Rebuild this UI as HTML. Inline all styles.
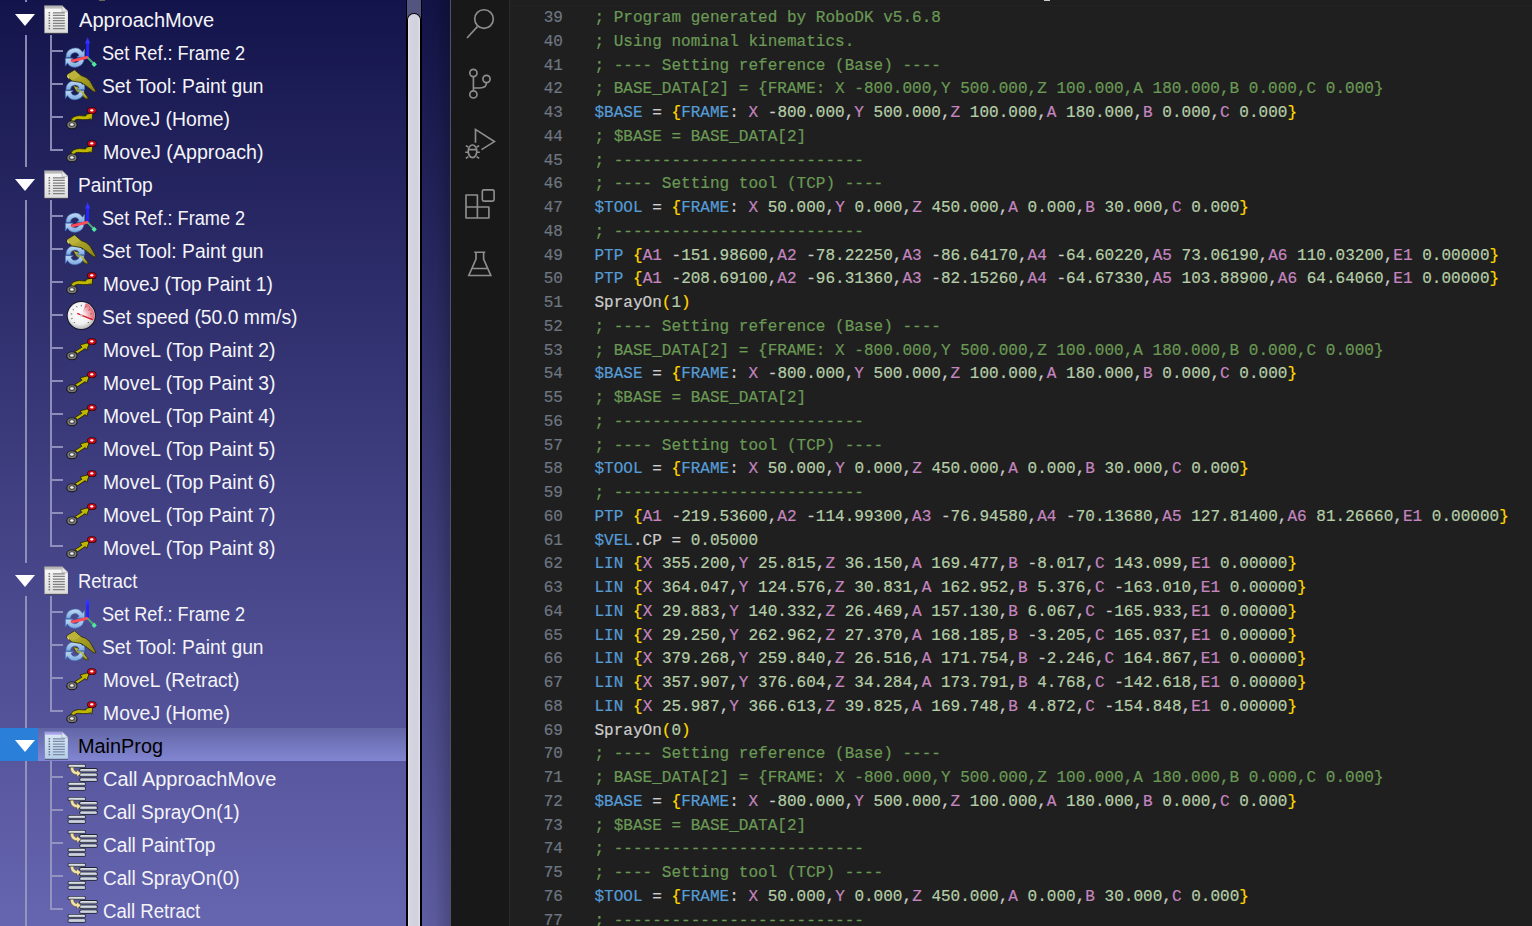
<!DOCTYPE html>
<html><head><meta charset="utf-8">
<style>
html,body{margin:0;padding:0;}
body{width:1532px;height:926px;overflow:hidden;position:relative;background:#1f1f1f;font-family:"Liberation Sans",sans-serif;}
#left{position:absolute;left:0;top:0;width:450px;height:926px;overflow:hidden;
 background:linear-gradient(180deg,#14144c 0%,#6665b0 100%);}
#lshade{position:absolute;left:422px;top:0;width:28px;height:926px;background:linear-gradient(90deg,rgba(0,0,0,0.07) 0%,rgba(0,0,0,0.12) 50%,rgba(0,0,0,0.27) 100%);}
#lsep{position:absolute;left:450px;top:0;width:1px;height:926px;background:#50506a;}
#sb{position:absolute;left:406px;top:0;width:16px;height:926px;background:#000;}
#sbtrack{position:absolute;left:1px;top:0;width:14px;height:20px;background:#545480;}
#sbthumb{position:absolute;left:2px;top:14px;width:12px;height:920px;background:linear-gradient(90deg,#e4e4f0,#d4d4e0 18%,#d2d2de 80%,#e2e2ee);border-radius:6px 6px 0 0;box-shadow:0 0 0 1px #000;}
.vl1{position:absolute;left:25px;width:2px;background:#9c9cc4;opacity:.85}
.vl2{position:absolute;left:50px;width:2px;background:#9c9cc4;opacity:.85}
.hl{position:absolute;left:52px;width:11px;height:2px;background:#9c9cc4;opacity:.85}
.tri{position:absolute;left:15px;width:21px;height:13px;}
.tri:before{content:"";position:absolute;left:0;top:0;border-left:10.3px solid transparent;border-right:10.3px solid transparent;border-top:12.3px solid #fff;}
.sel{position:absolute;left:0;width:406px;height:33px;background:linear-gradient(180deg,#6266a6,#8286d2);}
.selb{position:absolute;left:0;width:38px;height:33px;background:#2a80d8;}
.doc{position:absolute;left:42px;}
.ic{position:absolute;left:64px;}
.t1,.t2{position:absolute;height:33px;line-height:33px;font-size:20px;color:#f4f4f8;white-space:nowrap;transform-origin:0 0;}
.t1{left:78px;}
.t2{left:103px;}
.blk{color:#000;}
#act{position:absolute;left:451px;top:0;width:58px;height:926px;background:#181818;}
#actb{position:absolute;left:509px;top:0;width:1px;height:926px;background:#2b2b2b;}
#act svg{position:absolute;left:0;top:0;}
#ed{position:absolute;left:510px;top:0;width:1022px;height:926px;background:#1f1f1f;overflow:hidden;}
#edshadow{position:absolute;left:0;top:5px;width:1022px;height:1px;background:#222326;}
#bcmark{position:absolute;left:534px;top:0;width:6px;height:1px;background:#c8c8c8;}
pre{margin:0;font-family:"Liberation Mono",monospace;font-size:16px;letter-spacing:0.021px;-webkit-text-stroke:0.2px currentColor;line-height:23.75px;position:absolute;white-space:pre;}
#nums{left:0;width:53px;text-align:right;color:#6e7681;top:7px;}
#code{left:84.5px;top:7px;color:#cccccc;}
i{font-style:normal;}
.c{color:#6a9955}.k{color:#569cd6}.p{color:#c586c0}.n{color:#b5cea8}.b{color:#ffd700}
</style></head><body>
<svg width="0" height="0" style="position:absolute">
<defs>
 <linearGradient id="gpage" x1="0" y1="0" x2="0" y2="1"><stop offset="0" stop-color="#fafafa"/><stop offset="1" stop-color="#dcdcdc"/></linearGradient>
 <linearGradient id="gtop" x1="0" y1="0" x2="0" y2="1"><stop offset="0" stop-color="#9a9a9a"/><stop offset="1" stop-color="#e0e0e0"/></linearGradient>
 <linearGradient id="gpagesel" x1="0" y1="0" x2="0" y2="1"><stop offset="0" stop-color="#dde8f6"/><stop offset="1" stop-color="#b8cfe8"/></linearGradient>
 <linearGradient id="gtopsel" x1="0" y1="0" x2="0" y2="1"><stop offset="0" stop-color="#8a7ae8"/><stop offset="1" stop-color="#c8c8f0"/></linearGradient>
 <radialGradient id="ggauge" cx=".45" cy=".4" r=".6"><stop offset="0" stop-color="#ffffff"/><stop offset=".7" stop-color="#f0f0f0"/><stop offset="1" stop-color="#b8b8b8"/></radialGradient>
 <g id="idoc">
  <path d="M2.5 2 H20 L26.3 8 V29 H2.5 Z" fill="#222" transform="translate(0.6,0.8)" opacity=".7"/>
  <path d="M2.5 1.7 H20 L26.3 7.7 V29 H2.5 Z" fill="url(#gpage)" stroke="#8a8a8a" stroke-width=".6"/>
  <path d="M3 2.2 H20 L23 5 H3 Z" fill="url(#gtop)"/>
  <path d="M20 1.7 L20 7.7 L26.3 7.7 Z" fill="#e8e8e8" stroke="#9a9a9a" stroke-width=".5"/>
  <g stroke="#808080" stroke-width="1.3">
   <path d="M10.9 8.8H22.8M10.9 11.4H22.8M10.9 14.1H22.8M10.9 16.6H22.8M10.9 19.3H22.8M10.9 21.9H22.8M10.9 24.6H22.8"/>
  </g>
  <g fill="#6a6a6a"><rect x="6.6" y="8.1" width="1.5" height="1.4"/><rect x="6.6" y="10.7" width="1.5" height="1.4"/><rect x="6.6" y="13.4" width="1.5" height="1.4"/><rect x="6.6" y="15.9" width="1.5" height="1.4"/><rect x="6.6" y="18.6" width="1.5" height="1.4"/><rect x="6.6" y="21.2" width="1.5" height="1.4"/><rect x="6.6" y="23.9" width="1.5" height="1.4"/></g>
 </g>
 <g id="idocsel">
  <path d="M2.5 2 H20 L26.3 8 V29 H2.5 Z" fill="#223" transform="translate(0.6,0.8)" opacity=".7"/>
  <path d="M2.5 1.7 H20 L26.3 7.7 V29 H2.5 Z" fill="url(#gpagesel)" stroke="#6a7a9a" stroke-width=".6"/>
  <path d="M3 2.2 H20 L23 5 H3 Z" fill="url(#gtopsel)"/>
  <path d="M20 1.7 L20 7.7 L26.3 7.7 Z" fill="#dde6f2" stroke="#8a9aba" stroke-width=".5"/>
  <g stroke="#7a8ca8" stroke-width="1.3">
   <path d="M10.9 8.8H22.8M10.9 11.4H22.8M10.9 14.1H22.8M10.9 16.6H22.8M10.9 19.3H22.8M10.9 21.9H22.8M10.9 24.6H22.8"/>
  </g>
  <g fill="#5a6a88"><rect x="6.6" y="8.1" width="1.5" height="1.4"/><rect x="6.6" y="10.7" width="1.5" height="1.4"/><rect x="6.6" y="13.4" width="1.5" height="1.4"/><rect x="6.6" y="15.9" width="1.5" height="1.4"/><rect x="6.6" y="18.6" width="1.5" height="1.4"/><rect x="6.6" y="21.2" width="1.5" height="1.4"/><rect x="6.6" y="23.9" width="1.5" height="1.4"/></g>
 </g>
 <linearGradient id="garr" x1="0" y1="0" x2="0" y2="1"><stop offset="0" stop-color="#c4dcf4"/><stop offset="1" stop-color="#7aa8e0"/></linearGradient>
 <g id="arrows">
  <path d="M2 21.5 A9 9 0 0 1 18.6 16.3 L20.6 13.3 L20.6 21.2 L12.8 21.2 L15.1 19.3 A4.5 4.5 0 0 0 6.5 21.2 Z" fill="url(#garr)" stroke="#3f70b8" stroke-width=".6"/>
  <path d="M20 22 A9 9 0 0 1 3.4 27 L1.4 30 L1.4 22.2 L9.2 22.2 L6.9 24.1 A4.5 4.5 0 0 0 15.5 22.2 Z" fill="url(#garr)" stroke="#3f70b8" stroke-width=".6"/>
 </g>
 <g id="iref">
  <use href="#arrows"/>
  <path d="M23.6 21.5 V6" stroke="#2424ff" stroke-width="2.8"/>
  <path d="M21 7.5 L23.6 1.3 L26.2 7.5 Z" fill="#3434ff"/>
  <path d="M8.2 24.8 L23 21.3" stroke="#ff4a58" stroke-width="2.8" stroke-linecap="round"/>
  <path d="M23.6 21.5 L30 28" stroke="#50a878" stroke-width="1.8"/>
  <path d="M30.2 25.6 L32.8 28.6 L30.2 31 L27.6 28.4 Z" fill="#50e8a0"/>
 </g>
 <g id="itool">
  <linearGradient id="ggun" x1="0" y1="0" x2="1" y2="1"><stop offset="0" stop-color="#c8c048"/><stop offset=".5" stop-color="#a49c22"/><stop offset="1" stop-color="#8a8418"/></linearGradient>
  <path d="M9 16.5 L14 18 L19 22 L24.5 29.5 L22 30 L12 22 Z" fill="url(#ggun)" stroke="#2a2a08" stroke-width=".7"/>
  <use href="#arrows" transform="translate(0,-0.5)"/>
  <path d="M3 5.5 L10.5 1 L17 6.5 L22 8.5 L26 12 L32 22.5 L30 23 L21 16 L17 13.5 L8 12 L3 8 Z" fill="url(#ggun)" stroke="#2a2a08" stroke-width=".8"/>
  <path d="M3.3 6 L10.5 1.6 L16.5 6.8 L9 10.5 Z" fill="#bcb43a"/>
  <path d="M3.3 6 L5 8.5 L5 10 L3.3 8 Z" fill="#f0eca0"/>
  <path d="M14.5 20.5 L19 23 L23.5 29 L20.5 27 Z" fill="#b8b030"/>
 </g>
 <g id="disc">
  <ellipse cx="7.9" cy="22.9" rx="5.6" ry="4.4" fill="#141414"/>
  <ellipse cx="7.9" cy="22.7" rx="4.6" ry="3.5" fill="#7c7c7c"/>
  <ellipse cx="7.9" cy="22.6" rx="3.1" ry="2.3" fill="#4c4c4c"/>
  <ellipse cx="7.9" cy="22.5" rx="1.8" ry="1.3" fill="#f2f2ee"/>
  <ellipse cx="27.8" cy="8.7" rx="4.7" ry="3.4" fill="#2a0000"/>
  <ellipse cx="27.8" cy="8.6" rx="4.1" ry="2.8" fill="#c80a18"/>
  <ellipse cx="27.8" cy="8.4" rx="1.7" ry="1.1" fill="#fff"/>
 </g>
 <g id="imovej">
  <path d="M6.6 18.6 C8 15.2 11 13.8 15.5 13.6 C18 13.6 19.5 14.2 21.8 13.9 L22 12.4 L28.8 10.8 L27.9 18.2 L26.4 16.9 C23 17.9 19 17.9 15.5 17.4 C12.5 17.1 10.8 18 9.8 19.8 Z" fill="#c0b800" stroke="#1a1a08" stroke-width=".8"/>
  <use href="#disc"/>
 </g>
 <g id="imovel">
  <path d="M10.8 18.6 L17.8 14.3 L16.2 11.8 L25.8 9.3 L22.6 17.3 L21.2 15.6 L13.6 20.6 Z" fill="#c0b800" stroke="#1a1a08" stroke-width=".8"/>
  <use href="#disc"/>
 </g>
 <radialGradient id="gsect" cx="17.3" cy="15.5" r="13.5" gradientUnits="userSpaceOnUse"><stop offset="0" stop-color="#ffffff" stop-opacity="0"/><stop offset=".45" stop-color="#f4c0c8"/><stop offset="1" stop-color="#e86070"/></radialGradient>
 <g id="ispeed">
  <circle cx="17.3" cy="15.5" r="14.6" fill="#161628"/>
  <circle cx="17.3" cy="15.5" r="13.6" fill="url(#ggauge)"/>
  <path d="M17.3 15.5 L21.7 3.2 A13 13 0 0 1 29.4 20 Z" fill="url(#gsect)"/>
  <g stroke="#505050" stroke-width=".9">
   <path d="M10.8 22.0 L9.8 23.0 M8.6 18.3 L7.2 18.8 M8.2 14.1 L6.8 13.8 M9.9 10.1 L8.7 9.3 M13.1 7.3 L12.5 6.1 M17.3 6.3 L17.3 4.9 M21.5 7.3 L22.1 6.1 M24.7 10.1 L25.9 9.3 M26.4 14.1 L27.8 13.8 M26.0 18.3 L27.4 18.8 M23.8 22.0 L24.8 23.0"/>
  </g>
  <path d="M13.2 13.4 L28.8 19.8" stroke="#e01828" stroke-width="1.3"/>
  <circle cx="17.3" cy="15.4" r="1.3" fill="#c8c8c8"/>
 </g>
 <g id="bar"><rect x="-.7" y="-2.1" width="18.4" height="4.2" rx="1.8" fill="#23232e"/><rect x="0" y="-1.3" width="17" height="2.6" rx="1.2" fill="#bcc4d0"/><rect x="1" y="-1.1" width="15" height=".9" fill="#dfe5ee"/></g>
 <g id="icall">
  <use href="#bar" transform="translate(4.3,4)"/>
  <use href="#bar" transform="translate(16,8.2)"/>
  <use href="#bar" transform="translate(16,12.9)"/>
  <use href="#bar" transform="translate(16,17.7)"/>
  <use href="#bar" transform="translate(4.3,22)"/>
  <use href="#bar" transform="translate(4.3,26.6)"/>
  <path d="M6.3 5.2 L9.6 5.2 C9.6 7.8 10.6 9.3 12.8 9.6 L12.6 7.4 L17 11.3 L13 15.2 L13 12.8 C8.8 12.5 6.3 9.8 6.3 5.2 Z" fill="#f2e2a4" stroke="#4a4420" stroke-width=".5"/>
 </g>
</defs>
</svg>

<div id="left">
<div class="vl1" style="top:-40px;height:42px"></div>
<div class="vl1" style="top:35px;height:132px"></div>
<div class="vl1" style="top:200px;height:363px"></div>
<div class="vl1" style="top:596px;height:132px"></div>
<div class="vl1" style="top:761px;height:165px"></div>
<div class="hl" style="top:50px"></div>
<div class="vl2" style="top:35px;height:33px"></div>
<div class="hl" style="top:83px"></div>
<div class="vl2" style="top:68px;height:33px"></div>
<div class="hl" style="top:116px"></div>
<div class="vl2" style="top:101px;height:33px"></div>
<div class="hl" style="top:149px"></div>
<div class="vl2" style="top:134px;height:17px"></div>
<div class="hl" style="top:215px"></div>
<div class="vl2" style="top:200px;height:33px"></div>
<div class="hl" style="top:248px"></div>
<div class="vl2" style="top:233px;height:33px"></div>
<div class="hl" style="top:281px"></div>
<div class="vl2" style="top:266px;height:33px"></div>
<div class="hl" style="top:314px"></div>
<div class="vl2" style="top:299px;height:33px"></div>
<div class="hl" style="top:347px"></div>
<div class="vl2" style="top:332px;height:33px"></div>
<div class="hl" style="top:380px"></div>
<div class="vl2" style="top:365px;height:33px"></div>
<div class="hl" style="top:413px"></div>
<div class="vl2" style="top:398px;height:33px"></div>
<div class="hl" style="top:446px"></div>
<div class="vl2" style="top:431px;height:33px"></div>
<div class="hl" style="top:479px"></div>
<div class="vl2" style="top:464px;height:33px"></div>
<div class="hl" style="top:512px"></div>
<div class="vl2" style="top:497px;height:33px"></div>
<div class="hl" style="top:545px"></div>
<div class="vl2" style="top:530px;height:17px"></div>
<div class="hl" style="top:611px"></div>
<div class="vl2" style="top:596px;height:33px"></div>
<div class="hl" style="top:644px"></div>
<div class="vl2" style="top:629px;height:33px"></div>
<div class="hl" style="top:677px"></div>
<div class="vl2" style="top:662px;height:33px"></div>
<div class="hl" style="top:710px"></div>
<div class="vl2" style="top:695px;height:17px"></div>
<div class="hl" style="top:776px"></div>
<div class="vl2" style="top:761px;height:33px"></div>
<div class="hl" style="top:809px"></div>
<div class="vl2" style="top:794px;height:33px"></div>
<div class="hl" style="top:842px"></div>
<div class="vl2" style="top:827px;height:33px"></div>
<div class="hl" style="top:875px"></div>
<div class="vl2" style="top:860px;height:33px"></div>
<div class="hl" style="top:908px"></div>
<div class="vl2" style="top:893px;height:17px"></div>
<div class="tri" style="top:14px"></div>
<svg class="doc" style="top:4px" width="26" height="31"><use href="#idoc"/></svg>
<div class="t1" style="top:4px;left:78.70px;transform:scaleX(1.0052)">ApproachMove</div>
<svg class="ic" style="top:36px" width="34" height="32"><use href="#iref"/></svg>
<div class="t2" style="top:37px;left:102.49px;transform:scaleX(0.9071)">Set Ref.: Frame 2</div>
<svg class="ic" style="top:69px" width="34" height="32"><use href="#itool"/></svg>
<div class="t2" style="top:70px;left:102.44px;transform:scaleX(0.9645)">Set Tool: Paint gun</div>
<svg class="ic" style="top:102px" width="34" height="32"><use href="#imovej"/></svg>
<div class="t2" style="top:103px;left:103.43px;transform:scaleX(0.9690)">MoveJ (Home)</div>
<svg class="ic" style="top:135px" width="34" height="32"><use href="#imovej"/></svg>
<div class="t2" style="top:136px;left:103.42px;transform:scaleX(0.9826)">MoveJ (Approach)</div>
<div class="tri" style="top:179px"></div>
<svg class="doc" style="top:169px" width="26" height="31"><use href="#idoc"/></svg>
<div class="t1" style="top:169px;left:78.44px;transform:scaleX(0.9605)">PaintTop</div>
<svg class="ic" style="top:201px" width="34" height="32"><use href="#iref"/></svg>
<div class="t2" style="top:202px;left:102.49px;transform:scaleX(0.9071)">Set Ref.: Frame 2</div>
<svg class="ic" style="top:234px" width="34" height="32"><use href="#itool"/></svg>
<div class="t2" style="top:235px;left:102.44px;transform:scaleX(0.9645)">Set Tool: Paint gun</div>
<svg class="ic" style="top:267px" width="34" height="32"><use href="#imovej"/></svg>
<div class="t2" style="top:268px;left:103.45px;transform:scaleX(0.9545)">MoveJ (Top Paint 1)</div>
<svg class="ic" style="top:300px" width="34" height="32"><use href="#ispeed"/></svg>
<div class="t2" style="top:301px;left:102.43px;transform:scaleX(0.9665)">Set speed (50.0 mm/s)</div>
<svg class="ic" style="top:333px" width="34" height="32"><use href="#imovel"/></svg>
<div class="t2" style="top:334px;left:103.43px;transform:scaleX(0.9670)">MoveL (Top Paint 2)</div>
<svg class="ic" style="top:366px" width="34" height="32"><use href="#imovel"/></svg>
<div class="t2" style="top:367px;left:103.43px;transform:scaleX(0.9670)">MoveL (Top Paint 3)</div>
<svg class="ic" style="top:399px" width="34" height="32"><use href="#imovel"/></svg>
<div class="t2" style="top:400px;left:103.43px;transform:scaleX(0.9670)">MoveL (Top Paint 4)</div>
<svg class="ic" style="top:432px" width="34" height="32"><use href="#imovel"/></svg>
<div class="t2" style="top:433px;left:103.43px;transform:scaleX(0.9670)">MoveL (Top Paint 5)</div>
<svg class="ic" style="top:465px" width="34" height="32"><use href="#imovel"/></svg>
<div class="t2" style="top:466px;left:103.43px;transform:scaleX(0.9670)">MoveL (Top Paint 6)</div>
<svg class="ic" style="top:498px" width="34" height="32"><use href="#imovel"/></svg>
<div class="t2" style="top:499px;left:103.43px;transform:scaleX(0.9670)">MoveL (Top Paint 7)</div>
<svg class="ic" style="top:531px" width="34" height="32"><use href="#imovel"/></svg>
<div class="t2" style="top:532px;left:103.43px;transform:scaleX(0.9670)">MoveL (Top Paint 8)</div>
<div class="tri" style="top:575px"></div>
<svg class="doc" style="top:565px" width="26" height="31"><use href="#idoc"/></svg>
<div class="t1" style="top:565px;left:78.48px;transform:scaleX(0.9203)">Retract</div>
<svg class="ic" style="top:597px" width="34" height="32"><use href="#iref"/></svg>
<div class="t2" style="top:598px;left:102.49px;transform:scaleX(0.9071)">Set Ref.: Frame 2</div>
<svg class="ic" style="top:630px" width="34" height="32"><use href="#itool"/></svg>
<div class="t2" style="top:631px;left:102.44px;transform:scaleX(0.9645)">Set Tool: Paint gun</div>
<svg class="ic" style="top:663px" width="34" height="32"><use href="#imovel"/></svg>
<div class="t2" style="top:664px;left:103.44px;transform:scaleX(0.9553)">MoveL (Retract)</div>
<svg class="ic" style="top:696px" width="34" height="32"><use href="#imovej"/></svg>
<div class="t2" style="top:697px;left:103.43px;transform:scaleX(0.9690)">MoveJ (Home)</div>
<div class="sel" style="top:728px"></div><div class="selb" style="top:728px"></div>
<div class="tri" style="top:740px"></div>
<svg class="doc" style="top:730px" width="26" height="31"><use href="#idocsel"/></svg>
<div class="t1 blk" style="top:730px;left:78.41px;transform:scaleX(0.9929)">MainProg</div>
<svg class="ic" style="top:762px" width="34" height="32"><use href="#icall"/></svg>
<div class="t2" style="top:763px;left:102.60px;transform:scaleX(0.9994)">Call ApproachMove</div>
<svg class="ic" style="top:795px" width="34" height="32"><use href="#icall"/></svg>
<div class="t2" style="top:796px;left:102.65px;transform:scaleX(0.9525)">Call SprayOn(1)</div>
<svg class="ic" style="top:828px" width="34" height="32"><use href="#icall"/></svg>
<div class="t2" style="top:829px;left:102.65px;transform:scaleX(0.9534)">Call PaintTop</div>
<svg class="ic" style="top:861px" width="34" height="32"><use href="#icall"/></svg>
<div class="t2" style="top:862px;left:102.65px;transform:scaleX(0.9525)">Call SprayOn(0)</div>
<svg class="ic" style="top:894px" width="34" height="32"><use href="#icall"/></svg>
<div class="t2" style="top:895px;left:102.67px;transform:scaleX(0.9308)">Call Retract</div>
<div id="lshade"></div>
<div style="position:absolute;left:99px;top:0;width:6px;height:1px;background:#6a6850"></div>
<div id="sb"><div id="sbtrack"></div><div id="sbthumb"></div></div>
</div>
<div id="lsep"></div>

<div id="act">
<svg width="58" height="926" fill="none" stroke="#8e8e8e" stroke-width="1.65">
 <circle cx="33" cy="19" r="9.3"/>
 <path d="M26.4 26.6 L16 38"/>
 <circle cx="22.4" cy="73" r="3.6"/>
 <circle cx="35.5" cy="79" r="3.6"/>
 <circle cx="22.4" cy="94.4" r="3.6"/>
 <path d="M22.4 76.6 V90.8 M35.5 82.6 C35.5 86 33 88 29 88 H22.4"/>
 <path d="M24.5 142.8 V129.4 L43.4 141.6 L30.5 149.6"/>
 <ellipse cx="21.5" cy="151.3" rx="4.3" ry="6.3"/>
 <path d="M17.2 149.6 H25.8 M17.3 147 L14.8 145.6 M17 152.2 H14.2 M17.4 156.6 L14.8 158.4 M25.7 147 L28.2 145.6 M26 152.2 H28.8 M25.6 156.6 L28.2 158.4"/>
 <path d="M15 195 H26.4 V207 H37.9 V218 H15 Z M15 207 H26.4 V218" stroke-linejoin="round"/>
 <rect x="31.3" y="189.9" width="11.8" height="11.2" rx="1.5"/>
 <path d="M23.3 252.2 H34.3 M25 252.2 V259 L17.8 275.5 H39.8 L32.6 259 V252.2 M20.5 268.5 H37"/>
</svg>
</div>
<div id="actb"></div>

<div id="ed">
<div id="edshadow"></div><div id="bcmark"></div>
<pre id="nums">39
40
41
42
43
44
45
46
47
48
49
50
51
52
53
54
55
56
57
58
59
60
61
62
63
64
65
66
67
68
69
70
71
72
73
74
75
76
77</pre>
<pre id="code"><i class="c">; Program generated by RoboDK v5.6.8</i>
<i class="c">; Using nominal kinematics.</i>
<i class="c">; ---- Setting reference (Base) ----</i>
<i class="c">; BASE_DATA[2] = {FRAME: X -800.000,Y 500.000,Z 100.000,A 180.000,B 0.000,C 0.000}</i>
<i class="k">$BASE</i> = <i class="b">{</i><i class="k">FRAME</i>: <i class="p">X</i> -<i class="n">800.000</i>,<i class="p">Y</i> <i class="n">500.000</i>,<i class="p">Z</i> <i class="n">100.000</i>,<i class="p">A</i> <i class="n">180.000</i>,<i class="p">B</i> <i class="n">0.000</i>,<i class="p">C</i> <i class="n">0.000</i><i class="b">}</i>
<i class="c">; $BASE = BASE_DATA[2]</i>
<i class="c">; --------------------------</i>
<i class="c">; ---- Setting tool (TCP) ----</i>
<i class="k">$TOOL</i> = <i class="b">{</i><i class="k">FRAME</i>: <i class="p">X</i> <i class="n">50.000</i>,<i class="p">Y</i> <i class="n">0.000</i>,<i class="p">Z</i> <i class="n">450.000</i>,<i class="p">A</i> <i class="n">0.000</i>,<i class="p">B</i> <i class="n">30.000</i>,<i class="p">C</i> <i class="n">0.000</i><i class="b">}</i>
<i class="c">; --------------------------</i>
<i class="k">PTP</i> <i class="b">{</i><i class="p">A1</i> -<i class="n">151.98600</i>,<i class="p">A2</i> -<i class="n">78.22250</i>,<i class="p">A3</i> -<i class="n">86.64170</i>,<i class="p">A4</i> -<i class="n">64.60220</i>,<i class="p">A5</i> <i class="n">73.06190</i>,<i class="p">A6</i> <i class="n">110.03200</i>,<i class="p">E1</i> <i class="n">0.00000</i><i class="b">}</i>
<i class="k">PTP</i> <i class="b">{</i><i class="p">A1</i> -<i class="n">208.69100</i>,<i class="p">A2</i> -<i class="n">96.31360</i>,<i class="p">A3</i> -<i class="n">82.15260</i>,<i class="p">A4</i> -<i class="n">64.67330</i>,<i class="p">A5</i> <i class="n">103.88900</i>,<i class="p">A6</i> <i class="n">64.64060</i>,<i class="p">E1</i> <i class="n">0.00000</i><i class="b">}</i>
SprayOn<i class="b">(</i><i class="n">1</i><i class="b">)</i>
<i class="c">; ---- Setting reference (Base) ----</i>
<i class="c">; BASE_DATA[2] = {FRAME: X -800.000,Y 500.000,Z 100.000,A 180.000,B 0.000,C 0.000}</i>
<i class="k">$BASE</i> = <i class="b">{</i><i class="k">FRAME</i>: <i class="p">X</i> -<i class="n">800.000</i>,<i class="p">Y</i> <i class="n">500.000</i>,<i class="p">Z</i> <i class="n">100.000</i>,<i class="p">A</i> <i class="n">180.000</i>,<i class="p">B</i> <i class="n">0.000</i>,<i class="p">C</i> <i class="n">0.000</i><i class="b">}</i>
<i class="c">; $BASE = BASE_DATA[2]</i>
<i class="c">; --------------------------</i>
<i class="c">; ---- Setting tool (TCP) ----</i>
<i class="k">$TOOL</i> = <i class="b">{</i><i class="k">FRAME</i>: <i class="p">X</i> <i class="n">50.000</i>,<i class="p">Y</i> <i class="n">0.000</i>,<i class="p">Z</i> <i class="n">450.000</i>,<i class="p">A</i> <i class="n">0.000</i>,<i class="p">B</i> <i class="n">30.000</i>,<i class="p">C</i> <i class="n">0.000</i><i class="b">}</i>
<i class="c">; --------------------------</i>
<i class="k">PTP</i> <i class="b">{</i><i class="p">A1</i> -<i class="n">219.53600</i>,<i class="p">A2</i> -<i class="n">114.99300</i>,<i class="p">A3</i> -<i class="n">76.94580</i>,<i class="p">A4</i> -<i class="n">70.13680</i>,<i class="p">A5</i> <i class="n">127.81400</i>,<i class="p">A6</i> <i class="n">81.26660</i>,<i class="p">E1</i> <i class="n">0.00000</i><i class="b">}</i>
<i class="k">$VEL</i>.CP = <i class="n">0.05000</i>
<i class="k">LIN</i> <i class="b">{</i><i class="p">X</i> <i class="n">355.200</i>,<i class="p">Y</i> <i class="n">25.815</i>,<i class="p">Z</i> <i class="n">36.150</i>,<i class="p">A</i> <i class="n">169.477</i>,<i class="p">B</i> -<i class="n">8.017</i>,<i class="p">C</i> <i class="n">143.099</i>,<i class="p">E1</i> <i class="n">0.00000</i><i class="b">}</i>
<i class="k">LIN</i> <i class="b">{</i><i class="p">X</i> <i class="n">364.047</i>,<i class="p">Y</i> <i class="n">124.576</i>,<i class="p">Z</i> <i class="n">30.831</i>,<i class="p">A</i> <i class="n">162.952</i>,<i class="p">B</i> <i class="n">5.376</i>,<i class="p">C</i> -<i class="n">163.010</i>,<i class="p">E1</i> <i class="n">0.00000</i><i class="b">}</i>
<i class="k">LIN</i> <i class="b">{</i><i class="p">X</i> <i class="n">29.883</i>,<i class="p">Y</i> <i class="n">140.332</i>,<i class="p">Z</i> <i class="n">26.469</i>,<i class="p">A</i> <i class="n">157.130</i>,<i class="p">B</i> <i class="n">6.067</i>,<i class="p">C</i> -<i class="n">165.933</i>,<i class="p">E1</i> <i class="n">0.00000</i><i class="b">}</i>
<i class="k">LIN</i> <i class="b">{</i><i class="p">X</i> <i class="n">29.250</i>,<i class="p">Y</i> <i class="n">262.962</i>,<i class="p">Z</i> <i class="n">27.370</i>,<i class="p">A</i> <i class="n">168.185</i>,<i class="p">B</i> -<i class="n">3.205</i>,<i class="p">C</i> <i class="n">165.037</i>,<i class="p">E1</i> <i class="n">0.00000</i><i class="b">}</i>
<i class="k">LIN</i> <i class="b">{</i><i class="p">X</i> <i class="n">379.268</i>,<i class="p">Y</i> <i class="n">259.840</i>,<i class="p">Z</i> <i class="n">26.516</i>,<i class="p">A</i> <i class="n">171.754</i>,<i class="p">B</i> -<i class="n">2.246</i>,<i class="p">C</i> <i class="n">164.867</i>,<i class="p">E1</i> <i class="n">0.00000</i><i class="b">}</i>
<i class="k">LIN</i> <i class="b">{</i><i class="p">X</i> <i class="n">357.907</i>,<i class="p">Y</i> <i class="n">376.604</i>,<i class="p">Z</i> <i class="n">34.284</i>,<i class="p">A</i> <i class="n">173.791</i>,<i class="p">B</i> <i class="n">4.768</i>,<i class="p">C</i> -<i class="n">142.618</i>,<i class="p">E1</i> <i class="n">0.00000</i><i class="b">}</i>
<i class="k">LIN</i> <i class="b">{</i><i class="p">X</i> <i class="n">25.987</i>,<i class="p">Y</i> <i class="n">366.613</i>,<i class="p">Z</i> <i class="n">39.825</i>,<i class="p">A</i> <i class="n">169.748</i>,<i class="p">B</i> <i class="n">4.872</i>,<i class="p">C</i> -<i class="n">154.848</i>,<i class="p">E1</i> <i class="n">0.00000</i><i class="b">}</i>
SprayOn<i class="b">(</i><i class="n">0</i><i class="b">)</i>
<i class="c">; ---- Setting reference (Base) ----</i>
<i class="c">; BASE_DATA[2] = {FRAME: X -800.000,Y 500.000,Z 100.000,A 180.000,B 0.000,C 0.000}</i>
<i class="k">$BASE</i> = <i class="b">{</i><i class="k">FRAME</i>: <i class="p">X</i> -<i class="n">800.000</i>,<i class="p">Y</i> <i class="n">500.000</i>,<i class="p">Z</i> <i class="n">100.000</i>,<i class="p">A</i> <i class="n">180.000</i>,<i class="p">B</i> <i class="n">0.000</i>,<i class="p">C</i> <i class="n">0.000</i><i class="b">}</i>
<i class="c">; $BASE = BASE_DATA[2]</i>
<i class="c">; --------------------------</i>
<i class="c">; ---- Setting tool (TCP) ----</i>
<i class="k">$TOOL</i> = <i class="b">{</i><i class="k">FRAME</i>: <i class="p">X</i> <i class="n">50.000</i>,<i class="p">Y</i> <i class="n">0.000</i>,<i class="p">Z</i> <i class="n">450.000</i>,<i class="p">A</i> <i class="n">0.000</i>,<i class="p">B</i> <i class="n">30.000</i>,<i class="p">C</i> <i class="n">0.000</i><i class="b">}</i>
<i class="c">; --------------------------</i></pre>
</div>
</body></html>
